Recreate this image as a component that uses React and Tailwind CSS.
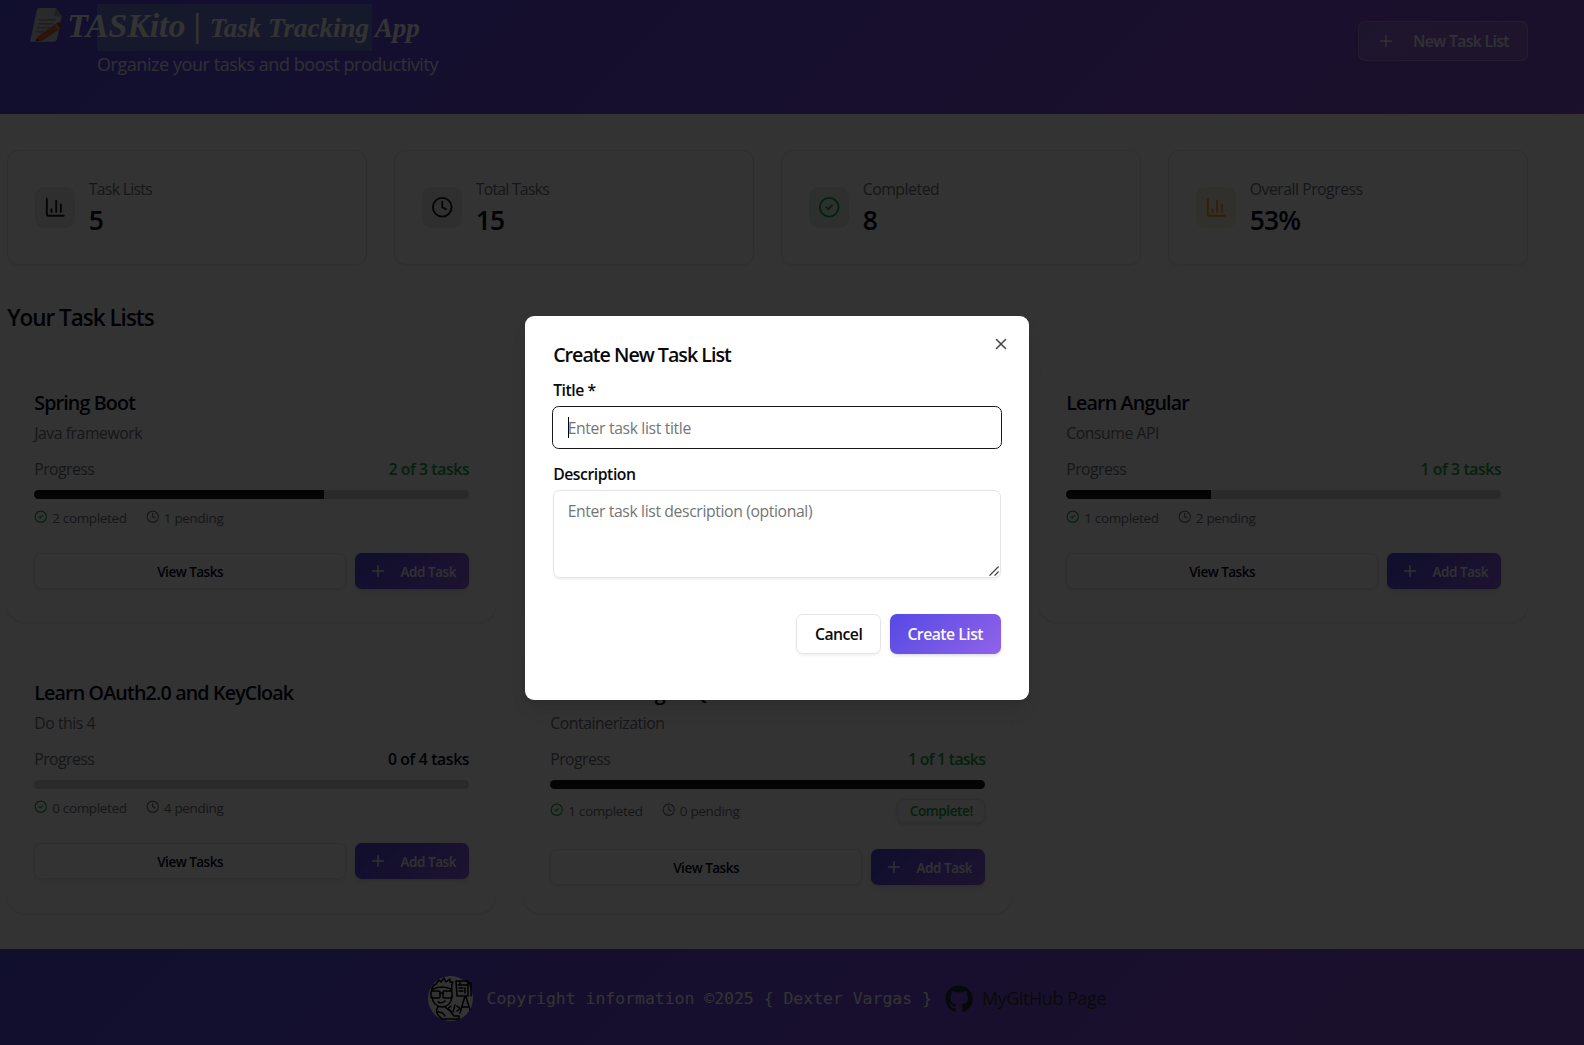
import React from "react";
import { ChartColumn, Clock, CircleCheck, Plus, X } from "lucide-react";
import { FaGithub } from "react-icons/fa";

const stats = [
  { label: "Task Lists", value: "5", Icon: ChartColumn, box: "bg-[#e8e8e8] text-[#18181b]", lt: "tracking-[-0.6px]" },
  { label: "Total Tasks", value: "15", Icon: Clock, box: "bg-[#e8e8e8] text-[#18181b]", lt: "tracking-[-0.65px]" },
  { label: "Completed", value: "8", Icon: CircleCheck, box: "bg-[#e4f0ea] text-[#16a34a]", lt: "tracking-[-0.4px]" },
  { label: "Overall Progress", value: "53%", Icon: ChartColumn, box: "bg-[#f6eedf] text-[#f59e0b]", lt: "tracking-[-0.42px]" },
];

const lists = [
  { title: "Spring Boot", desc: "Java framework", done: 2, total: 3 },
  null,
  { title: "Learn Angular", desc: "Consume API", done: 1, total: 3 },
  { title: "Learn OAuth2.0 and KeyCloak", desc: "Do this 4", done: 0, total: 4 },
  { title: "Docker PostgreSQL", desc: "Containerization", done: 1, total: 1 },
];

function MemoIcon() {
  return (
    <svg viewBox="0 0 34 35" className="h-[31px] w-[30px] shrink-0">
      <path d="M9 0H26L32 8 27 32Q26.500 34 24 34H0L7 2Q7.500 0 9 0Z" fill="#d0cad8" />
      <path d="M26 0 24 8 32 9Z" fill="#a79fb3" />
      <path d="M9 12H26M8 16H24M7 20H20M6 24H14" stroke="#8c859b" strokeWidth="1.300" />
      <path d="M8.500 28 26 16 30 21 12.500 33 5.500 34Z" fill="#d9692c" />
      <path d="M24.500 17 26.500 15.600 30.500 20.700 28.500 22Z" fill="#a9a3b5" />
      <path d="M26.500 15.600 29 14Q32.500 14 33 18.500L30.500 20.700Z" fill="#c23a3a" />
      <path d="M5.500 34 7 30.500 9.500 33Z" fill="#40304a" />
    </svg>
  );
}

function Avatar() {
  return (
    <svg viewBox="0 0 45 45" className="h-[40px] w-[40px] shrink-0">
      <circle cx="22.500" cy="22.500" r="22.500" fill="#fff" />
      <g fill="none" stroke="#000" strokeWidth="1.500" strokeLinejoin="round" strokeLinecap="round">
        <path d="M4 15Q3 10 8 8L11 4 13 6 16 2 18 6 22 3 22 6 25 6Q23 9 24 14M5 13Q14 9 23 13" />
        <path d="M4 21Q5 30 14 31 23 30 24 21" />
        <rect x="3" y="15" width="9" height="7" rx="1" />
        <rect x="15" y="15" width="9" height="7" rx="1" />
        <path d="M12 17H15M10 26Q14 28 17 25M10 31Q7 35 10 39L14 43H31M17 31 22 35 26 40H31V43M10 36Q15 36 17 40" />
        <path d="M28 5H40V20H29ZM32 5V9M30 9H40M31 12H35M31 15H35M37 12V17M41 7H43V20" />
        <path d="M37 20 32 37M38 21 42 34M34 31H40M23 30 20 32.500 23 35M27 29 25 36M29 30 32 32.500 29 35" />
      </g>
    </svg>
  );
}

function TaskCard({ item }) {
  const complete = item.done === item.total;
  const countStyle = complete
    ? "font-semibold tracking-[-0.6px] text-[#16a34a]"
    : item.done > 0
      ? "font-semibold tracking-[-0.34px] text-[#16a34a]"
      : "font-semibold tracking-[-0.3px] text-[#020817]";
  return (
    <div className="rounded-2xl bg-[#fcfcfd] p-6 shadow-[0_1px_2px_rgba(0,0,0,0.1)]">
      <div className="flex h-[28px] items-center pt-px text-[17.500px] font-semibold tracking-[-0.76px] text-[#020817]">{item.title}</div>
      <div className="mt-[3px] flex h-[23px] items-center text-[14px] tracking-[-0.38px] text-[#71717a]">{item.desc}</div>
      <div className="mt-[10.500px] flex h-5 items-center justify-between text-[14px]">
        <span className="tracking-[-0.45px] text-[#71717a]">Progress</span>
        <span className={countStyle}>
          {item.done} of {item.total} tasks
        </span>
      </div>
      <div className="mt-[7.500px] h-2 overflow-hidden rounded-full bg-[#d0d0d2]">
        <div className="h-full bg-[#18181b]" style={{ width: `${(item.done / item.total) * 100}%` }} />
      </div>
      <div className={complete ? "mt-2 flex h-[21.500px] items-center justify-between" : "mt-2 flex h-4 items-center justify-between"}>
        <div className="flex gap-[17px] pt-[2px] text-[12px] tracking-[-0.3px] text-[#71717a]">
          <span className="flex items-center gap-1">
            <CircleCheck className="mb-[2px] h-3 w-3 text-[#16a34a]" />
            {item.done} completed
          </span>
          <span className="flex items-center gap-1">
            <Clock className="mb-[2px] h-3 w-3" />
            {item.total - item.done} pending
          </span>
        </div>
        {complete && (
          <span className="mt-px flex h-[21.500px] w-[78px] items-center justify-center rounded-md border border-[#d0e8da] bg-[#f3faf6] pt-px text-[12px] font-semibold tracking-[-0.35px] text-[#16a34a] shadow">
            Complete!
          </span>
        )}
      </div>
      <div className={complete ? "mt-[23.500px] flex gap-2" : "mt-6 flex gap-2"}>
        <button className="h-8 flex-1 rounded-md border border-[#e6e6ea] bg-white pt-[2px] text-[12px] font-semibold tracking-[-0.45px] text-[#020817] shadow-xs">
          View Tasks
        </button>
        <button className="flex h-8 w-[101.500px] items-center rounded-md bg-linear-[135deg] from-[#4f46e5] to-[#9160ea] pl-[12.500px] text-[12px] font-semibold tracking-[-0.4px] text-[#f4f4f5] shadow">
          <Plus className="mr-3 h-4 w-4" />
          <span className="pt-[2px]">Add Task</span>
        </button>
      </div>
    </div>
  );
}

function Dialog() {
  return (
    <div className="absolute top-[280.9px] left-[466.7px] h-[341.3px] w-[448px] rounded-lg bg-white p-[25px] text-[#09090b] shadow-lg">
      <X className="absolute top-[16.500px] right-[17px] h-4 w-4 text-[#444]" strokeWidth={2} />
      <div className="flex h-[18px] items-center pt-px text-[17.500px] font-semibold tracking-[-0.9px]">Create New Task List</div>
      <label className="mt-[13.500px] flex h-5 items-center text-[14px] font-semibold tracking-[-0.4px]">Title *</label>
      <div className="mt-[3.500px] -ml-px flex h-[38px] w-[400px] items-center rounded-md border border-[#18181b] px-[13px] text-[14px] text-[#757575]">
        <span className="h-[19px] w-px bg-black" />
        <span className="-ml-px pt-[2px] tracking-[-0.32px]">Enter task list title</span>
      </div>
      <label className="mt-[13px] flex h-5 items-center text-[14px] font-semibold tracking-[-0.4px]">Description</label>
      <div className="relative mt-[4px] h-[78px]">
        <textarea
          readOnly
          placeholder="Enter task list description (optional)"
          className="block h-full w-full resize-none rounded-md border border-[#e4e4e7] px-3 py-2 text-[14px] leading-5 tracking-[-0.34px] shadow-xs placeholder:text-[#757575]"
        />
        <svg viewBox="0 0 10 10" className="absolute right-[1.500px] bottom-[1.500px] h-[9px] w-[9px]">
          <path d="M0.500 9.500 9.500 0.500M5.500 9.500 9.500 5.500" stroke="#444" strokeWidth="1.300" />
        </svg>
      </div>
      <div className="mt-[31.500px] flex justify-end gap-2 text-[14px] font-semibold tracking-[-0.45px]">
        <button className="h-9 w-[75.500px] rounded-md border border-[#e4e4e7] pt-px pl-px shadow-xs">Cancel</button>
        <button className="h-9 w-[99px] rounded-md bg-linear-[135deg] from-[#5549e5] to-[#9163e8] pt-px text-[#fafafa] shadow">Create List</button>
      </div>
    </div>
  );
}

export default function App() {
  return (
    <div className="relative h-[928.9px] w-[1408px] overflow-hidden bg-white font-['Open_Sans','Noto_Sans',sans-serif] [zoom:1.125]">
      <header className="flex h-[101.3px] items-start justify-between bg-linear-[135deg] from-[#584be6] to-[#8a50dc] pr-[49.800px] pl-[26.700px]">
        <div>
          <div className="relative flex h-[46px] items-center font-['Liberation_Serif',serif] font-bold text-white italic">
            <span className="absolute top-[3.600px] left-[59.500px] h-[41.500px] w-[244.500px] bg-[#7aaec8]/50" />
            <MemoIcon />
            <div className="relative ml-[3px] whitespace-nowrap">
              <span className="text-[30px]">TASKito | </span>
              <span className="text-[24px]">Task Tracking App</span>
            </div>
          </div>
          <div className="ml-[59.500px] flex h-[22px] items-center text-[16px] tracking-[-0.39px] text-white/90">
            Organize your tasks and boost productivity
          </div>
        </div>
        <button className="mt-[18.300px] flex h-9 w-[151px] items-center rounded-md border border-white/25 bg-white/15 pl-4 text-[14px] font-semibold tracking-[-0.56px] text-white/90">
          <Plus className="mr-[16px] h-4 w-4" />
          <span className="pt-[2px]">New Task List</span>
        </button>
      </header>

      <main className="pt-8 pr-[49.600px] pl-[6.400px]">
        <section className="grid grid-cols-4 gap-6">
          {stats.map(({ label, value, Icon, box, lt }) => (
            <div key={label} className="flex h-[102px] items-center gap-3 rounded-[10px] border border-[#e4e4e8] px-[23.600px] shadow-xs">
              <div className={`flex h-9 w-9 items-center justify-center rounded-lg ${box}`}>
                <Icon className="h-5 w-5" />
              </div>
              <div className="pt-px">
                <div className={`text-[14px] leading-5 text-[#71717a] ${lt}`}>{label}</div>
                <div className="pt-px text-[23.500px] leading-8 font-semibold tracking-[-0.8px] text-[#020817]">{value}</div>
              </div>
            </div>
          ))}
        </section>
        <h2 className="mt-8 pt-px text-[20px] leading-7 font-semibold tracking-[-0.9px] text-[#020817]">Your Task Lists</h2>
        <section className="mt-[23px] grid auto-rows-[234px] grid-cols-3 gap-6">
          {lists.map((item, i) =>
            item ? <TaskCard key={i} item={item} /> : <div key={i} className="rounded-2xl bg-[#fcfcfd] shadow-[0_1px_2px_rgba(0,0,0,0.1)]" />
          )}
        </section>
      </main>

      <footer className="mt-8 flex h-[88px] items-center bg-linear-[135deg] from-[#584be6] to-[#8a50dc] pt-px pl-[380.500px]">
        <Avatar />
        <span className="ml-[12px] pt-px font-['DejaVu_Sans_Mono',monospace] text-[14.630px] whitespace-pre text-white">
          {"Copyright information ©2025 { Dexter Vargas }"}
        </span>
        <FaGithub className="ml-[12px] h-[25px] w-[25px] text-[#24292f]" />
        <span className="ml-[7.500px] text-[16px] tracking-[-0.4px] whitespace-nowrap text-[#333]">MyGitHub Page</span>
      </footer>

      <div className="absolute inset-0 bg-black/80" />
      <Dialog />
    </div>
  );
}
